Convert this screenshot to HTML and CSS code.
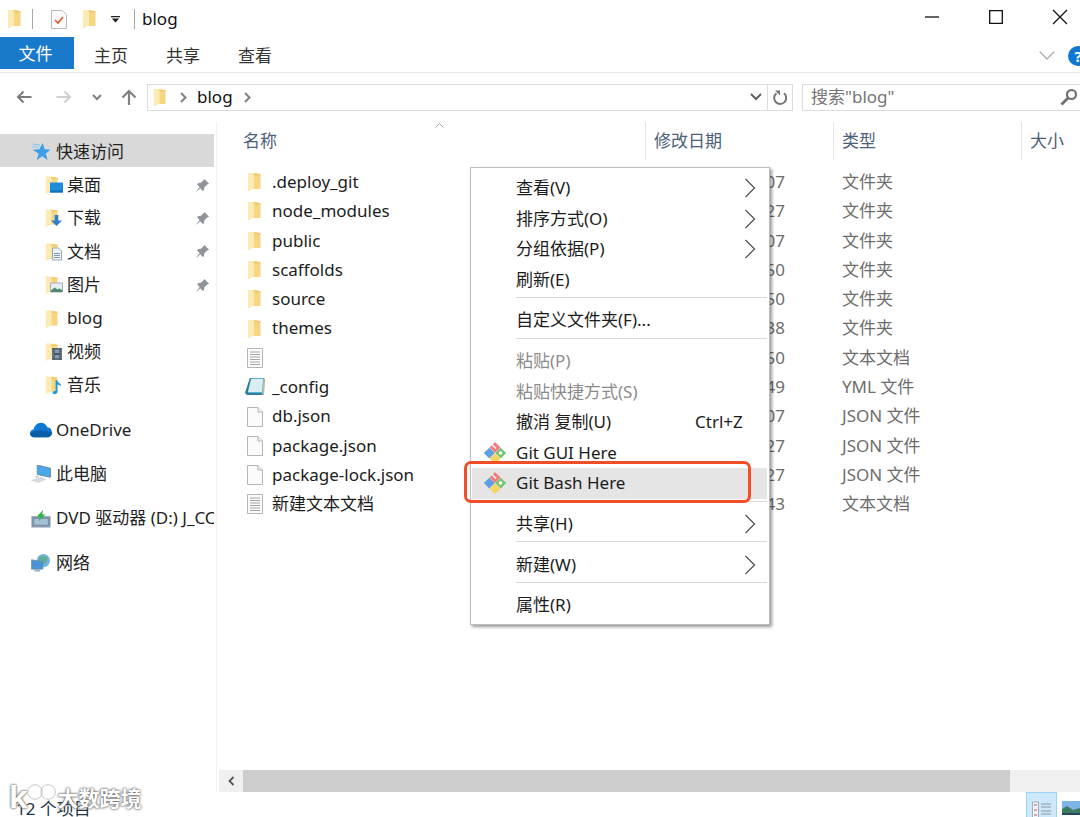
FILE: index.html
```html
<!DOCTYPE html>
<html lang="zh-CN">
<head>
<meta charset="utf-8">
<title>blog</title>
<link rel="stylesheet" href="styles.css">
</head>
<body>
<svg class="defs" aria-hidden="true">
  <symbol id="folder" viewBox="0 0 14 20">
    <path d="M1 1h8.500l4 1.500V17H5L1 19.500z" fill="#f7d682"/>
    <path d="M1 1h4.500l1.500 1v14.500L5 17 1 19.500z" fill="#fcebb4"/>
    <path d="M7 2h6.500v1.500H7z" fill="#efc871"/>
  </symbol>
  <symbol id="doc" viewBox="0 0 16 20">
    <path d="M.5.5h10.500l4.500 4.500v14.500H.5z" fill="#fbfbfb" stroke="#b5b5b5"/>
    <path d="M11 .5v4.500h4.500" fill="#eee" stroke="#b5b5b5"/>
  </symbol>
  <symbol id="txt" viewBox="0 0 16 20">
    <path d="M.5.5h15v19H.5z" fill="#fbfbfb" stroke="#b5b5b5"/>
    <path d="M3 4h10M3 6.500h10M3 9h10M3 11.500h10M3 14h10M3 16.500h10" stroke="#a5a5a5"/>
  </symbol>
  <symbol id="chev" viewBox="0 0 12 24">
    <path d="M1.500 3l9 9-9 9" fill="none" stroke="#555" stroke-width="1.300"/>
  </symbol>
  <symbol id="pin" viewBox="0 0 16 16">
    <path d="M10 1l5 5-2 .8-3 3-.5 3.200-1.200.8-2.800-2.800L2 14.500l-.5-.5L5 9.500 2.300 6.800l.8-1.200 3.200-.5 3-3z" fill="#8e9499"/>
  </symbol>
  <symbol id="git" viewBox="0 0 24 24">
    <path d="M12 1l5.500 5.500L12 12 6.500 6.500z" fill="#ee7f7f"/>
    <path d="M6.300 6.700L11.800 12l-5.500 5.500L.8 12z" fill="#5f9fe0"/>
    <path d="M17.700 6.700L23.200 12l-5.500 5.500L12.200 12z" fill="#79c36d"/>
    <circle cx="17.500" cy="12" r="1.800" fill="#fff"/>
    <path d="M12 12.200l5.500 5.500L12 23l-5.500-5.300z" fill="#f3d564"/>
    <path d="M9 3.500l4 4" stroke="#fff" stroke-width="1.200"/>
  </symbol>
</svg>

<div class="window">
  <header class="titlebar">
    <svg class="qa-folder"><use href="#folder"/></svg>
    <span class="qa-sep"></span>
    <svg class="qa-note" viewBox="0 0 16 19">
      <path d="M.5.5h11l4 4v14H.5z" fill="#fafafa" stroke="#bbb"/>
      <path d="M4 10l3 3 5-6" fill="none" stroke="#e2572b" stroke-width="1.600"/>
    </svg>
    <svg class="qa-folder2"><use href="#folder"/></svg>
    <svg class="qa-caret" viewBox="0 0 9 7"><path d="M0 0h9v1.200H0zM.8 2.500h7.400L4.500 6.500z" fill="#222"/></svg>
    <span class="qa-sep qa-sep2"></span>
    <span class="title-text">blog</span>
    <div class="winctl">
      <svg viewBox="0 0 16 16"><path d="M1 8h14" stroke="#111" stroke-width="1.300"/></svg>
      <svg viewBox="0 0 16 16"><path d="M1.700 1.700h12.600v12.600H1.700z" fill="none" stroke="#111" stroke-width="1.300"/></svg>
      <svg viewBox="0 0 16 16"><path d="M1 1l14 14M15 1L1 15" stroke="#111" stroke-width="1.300"/></svg>
    </div>
  </header>

  <nav class="tabs">
    <span class="tab tab-file">文件</span>
    <span class="tab">主页</span>
    <span class="tab">共享</span>
    <span class="tab">查看</span>
    <svg class="ribbon-chev" viewBox="0 0 16 9"><path d="M.7.7L8 8l7.300-7.300" fill="none" stroke="#a0a0a0" stroke-width="1.200"/></svg>
    <span class="help">?</span>
  </nav>

  <div class="addressrow">
    <svg class="nav-back" viewBox="0 0 16 14"><path d="M15.500 7H2M7.500 1.500L2 7l5.500 5.500" fill="none" stroke="#7b7b7b" stroke-width="2"/></svg>
    <svg class="nav-fwd" viewBox="0 0 16 14"><path d="M.5 7H14M8.500 1.500L14 7l-5.500 5.500" fill="none" stroke="#cfcfcf" stroke-width="2"/></svg>
    <svg class="nav-down" viewBox="0 0 10 7"><path d="M1 1l4 4 4-4" fill="none" stroke="#808080" stroke-width="2"/></svg>
    <svg class="nav-up" viewBox="0 0 16 16"><path d="M8 16V2M1.500 8.500L8 2l6.500 6.500" fill="none" stroke="#808080" stroke-width="2.200"/></svg>
    <div class="addressbox">
      <svg class="addr-folder"><use href="#folder"/></svg>
      <svg class="addr-chev" viewBox="0 0 7 11"><path d="M1 1l4.500 4.500L1 10" fill="none" stroke="#808080" stroke-width="2"/></svg>
      <span class="addr-text">blog</span>
      <svg class="addr-chev addr-chev2" viewBox="0 0 7 11"><path d="M1 1l4.500 4.500L1 10" fill="none" stroke="#808080" stroke-width="2"/></svg>
      <svg class="addr-drop" viewBox="0 0 12 8"><path d="M1 1l5 5 5-5" fill="none" stroke="#606060" stroke-width="2"/></svg>
      <span class="addr-refresh">
        <svg viewBox="0 0 14 16"><path d="M3.500 4.200A6 6 0 1 0 11 4.300" fill="none" stroke="#777" stroke-width="2"/><path d="M2 1.500h5v5z" fill="#777"/></svg>
      </span>
    </div>
    <div class="searchbox">
      <span>搜索"blog"</span>
      <svg viewBox="0 0 18 18"><circle cx="11.500" cy="6.500" r="4.500" fill="none" stroke="#707070" stroke-width="2.200"/><path d="M8 10l-6.500 6.500" stroke="#707070" stroke-width="2.800"/></svg>
    </div>
  </div>

  <div class="main">
    <aside class="sidebar">
      <section class="nav-group">
        <div class="nav-row root selected">
          <svg class="ico-root" viewBox="0 0 18 17"><path d="M10.500 0l2 6 5.500.3-4.500 3.600 1.700 6.100-5-3.500L5 16l1.800-6.100L1 6.300 7.500 6z" fill="#3f9ee8"/><path d="M0 3.500l7 .5M1 1l7 1" stroke="#8cc4ee" stroke-width="1"/></svg>
          <span>快速访问</span>
        </div>
        <div class="nav-row sub">
          <span class="fi"><svg class="fi-f"><use href="#folder"/></svg><svg class="fi-o" viewBox="0 0 13 10"><path d="M0 0h13v10H0z" fill="#1d8ddb"/><path d="M0 8h13v2H0z" fill="#0f6fb8"/></svg></span>
          <span>桌面</span>
          <svg class="pin"><use href="#pin"/></svg>
        </div>
        <div class="nav-row sub">
          <span class="fi"><svg class="fi-f"><use href="#folder"/></svg><svg class="fi-o" viewBox="0 0 13 12"><path d="M4.500 0h4v6h4L6.500 12 .5 6h4z" fill="#2f7fd0"/></svg></span>
          <span>下载</span>
          <svg class="pin"><use href="#pin"/></svg>
        </div>
        <div class="nav-row sub">
          <span class="fi"><svg class="fi-f"><use href="#folder"/></svg><svg class="fi-o fi-d" viewBox="0 0 10 13"><path d="M.5.5h6l3 3v9H.5z" fill="#eef2f6" stroke="#9aa7b3"/><path d="M2 6h6M2 8h6M2 10h6" stroke="#7d99b3"/></svg></span>
          <span>文档</span>
          <svg class="pin"><use href="#pin"/></svg>
        </div>
        <div class="nav-row sub">
          <span class="fi"><svg class="fi-f"><use href="#folder"/></svg><svg class="fi-o" viewBox="0 0 13 10"><path d="M.5.5h12v9H.5z" fill="#e6eef2" stroke="#a5adb3"/><path d="M1 8l3.500-3 3 2 2-1 3 2v1.500H1z" fill="#4f8a6e"/></svg></span>
          <span>图片</span>
          <svg class="pin"><use href="#pin"/></svg>
        </div>
        <div class="nav-row sub">
          <span class="fi"><svg class="fi-f"><use href="#folder"/></svg></span>
          <span>blog</span>
        </div>
        <div class="nav-row sub">
          <span class="fi"><svg class="fi-f"><use href="#folder"/></svg><svg class="fi-o fi-d" viewBox="0 0 11 13"><path d="M0 0h11v13H0z" fill="#4a5560"/><path d="M3 1.500h5v4H3zM3 7.500h5v4H3z" fill="#7f9db5"/><path d="M1 2v9M10 2v9" stroke="#c8cfd4" stroke-dasharray="1 1"/></svg></span>
          <span>视频</span>
        </div>
        <div class="nav-row sub">
          <span class="fi"><svg class="fi-f"><use href="#folder"/></svg><svg class="fi-o fi-d" viewBox="0 0 10 15"><path d="M3.500 0h1.500c.3 3 4.500 3 4.500 7-1-1.500-2.500-2-4-2v7.500c0 1.500-1.500 2.500-3 2.500S0 14 .5 13c.5-1.200 2-1.500 3-1z" fill="#1e9ad6"/></svg></span>
          <span>音乐</span>
        </div>
      </section>
      <section class="nav-group">
        <div class="nav-row root">
          <svg class="ico-root" viewBox="0 0 23 15"><path d="M4.500 15C1.500 15 0 13 0 10.800 0 8.500 2 7 3.800 7 4.500 3 7.800 0 11.500 0c3 0 5.500 1.800 6.500 4.500 3 .2 5 2.800 5 5.500 0 3-2.300 5-5 5z" fill="#0f78d4"/><path d="M4.500 15C1.500 15 0 13 0 10.800c6-4 15-4 23-.8 0 3-2.300 5-5 5z" fill="#0a5ea8"/></svg>
          <span>OneDrive</span>
        </div>
      </section>
      <section class="nav-group">
        <div class="nav-row root">
          <svg class="ico-root" viewBox="0 0 22 19"><path d="M7 0l14 3.500v9.500L7 10z" fill="#4aa8e8" stroke="#6a8ca8"/><path d="M0 16l11-3.500 6 2.500-9 4z" fill="#d5dade"/><path d="M5 11.500l4 1-3 1z" fill="#aab3ba"/></svg>
          <span>此电脑</span>
        </div>
      </section>
      <section class="nav-group">
        <div class="nav-row root">
          <svg class="ico-root" viewBox="0 0 18 16"><path d="M1 6h16v9H1z" fill="#7b93ac" stroke="#8a9bad"/><path d="M3 8h12v5H3z" fill="#a8c0d8"/><path d="M11 0l-1 4h3L7 10l1-4H5z" fill="#31b54a"/></svg>
          <span>DVD 驱动器 (D:) J_CCSA_X64FRE_ZH-CN_DV5</span>
        </div>
      </section>
      <section class="nav-group">
        <div class="nav-row root">
          <svg class="ico-root" viewBox="0 0 20 19"><circle cx="12.500" cy="7" r="7" fill="#6fb5e8"/><path d="M8 2c3 1 6 0 9 1l-1 6-5 3-3-3z" fill="#58a548" opacity=".55"/><path d="M0 6l12 2v8H0z" fill="#4a93d4" stroke="#6a8ca8" stroke-width=".7"/><path d="M3 16h6v2.500H3z" fill="#9eb2c3"/></svg>
          <span>网络</span>
        </div>
      </section>
    </aside>

    <div class="content">
      <div class="colheads">
        <svg class="sort" viewBox="0 0 9 5"><path d="M.5 4.500l4-4 4 4" fill="none" stroke="#a8a8a8"/></svg>
        <span class="colhead">名称</span>
        <span class="colhead">修改日期</span>
        <span class="colhead">类型</span>
        <span class="colhead colhead-last">大小</span>
      </div>
      <div class="filelist">
        <div class="file"><span class="fname"><svg class="i-folder"><use href="#folder"/></svg>.deploy_git</span><span class="fdate">2020/7/16 15:07</span><span class="ftype">文件夹</span></div>
        <div class="file"><span class="fname"><svg class="i-folder"><use href="#folder"/></svg>node_modules</span><span class="fdate">2020/7/16 14:27</span><span class="ftype">文件夹</span></div>
        <div class="file"><span class="fname"><svg class="i-folder"><use href="#folder"/></svg>public</span><span class="fdate">2020/7/16 15:07</span><span class="ftype">文件夹</span></div>
        <div class="file"><span class="fname"><svg class="i-folder"><use href="#folder"/></svg>scaffolds</span><span class="fdate">2020/7/16 13:50</span><span class="ftype">文件夹</span></div>
        <div class="file"><span class="fname"><svg class="i-folder"><use href="#folder"/></svg>source</span><span class="fdate">2020/7/16 13:50</span><span class="ftype">文件夹</span></div>
        <div class="file"><span class="fname"><svg class="i-folder"><use href="#folder"/></svg>themes</span><span class="fdate">2020/7/16 14:38</span><span class="ftype">文件夹</span></div>
        <div class="file"><span class="fname"><svg class="i-doc"><use href="#txt"/></svg></span><span class="fdate">2020/7/16 13:50</span><span class="ftype">文本文档</span></div>
        <div class="file"><span class="fname"><svg class="i-yml" viewBox="0 0 22 20"><path d="M6 1h14l-1 15H1z" fill="#5fb0c8"/><path d="M1 16L6 1l2 0-4 15h14l1 2H3z" fill="#2f7f9c"/><path d="M7 2h12l-1 13H4z" fill="#d8eef2"/><path d="M20 1l1 1-1 16-1 0z" fill="#c2a468"/></svg>_config</span><span class="fdate">2020/7/16 14:49</span><span class="ftype">YML 文件</span></div>
        <div class="file"><span class="fname"><svg class="i-doc"><use href="#doc"/></svg>db.json</span><span class="fdate">2020/7/16 15:07</span><span class="ftype">JSON 文件</span></div>
        <div class="file"><span class="fname"><svg class="i-doc"><use href="#doc"/></svg>package.json</span><span class="fdate">2020/7/16 14:27</span><span class="ftype">JSON 文件</span></div>
        <div class="file"><span class="fname"><svg class="i-doc"><use href="#doc"/></svg>package-lock.json</span><span class="fdate">2020/7/16 14:27</span><span class="ftype">JSON 文件</span></div>
        <div class="file"><span class="fname"><svg class="i-doc"><use href="#txt"/></svg>新建文本文档</span><span class="fdate">2020/7/16 15:43</span><span class="ftype">文本文档</span></div>
      </div>
      <div class="hscroll">
        <span class="hs-btn"><svg viewBox="0 0 7 10"><path d="M5.500 1L1.500 5l4 4" fill="none" stroke="#555" stroke-width="1.800"/></svg></span>
        <span class="hs-thumb"></span>
        <span class="hs-track"></span>
      </div>
    </div>
  </div>

  <footer class="statusbar">
    <span class="status-text">12 个项目</span>
    <span class="view-btn">
      <svg viewBox="0 0 20 20"><path d="M.5 1h6v18h-6z" fill="#eef3f7" stroke="#9fb0bd"/><path d="M2 4h3M2 9h3M2 14h3" stroke="#c55" stroke-width="1"/><path d="M9 3h10M9 6h10M9 10h10M9 13h10M9 17h10" stroke="#8d99a3"/></svg>
    </span>
    <svg class="view-thumb" viewBox="0 0 18 14"><path d="M0 0h18v14H0z" fill="#7fb4e8"/><path d="M0 8l5-3 6 4 7-2v7H0z" fill="#3f7a5e"/><path d="M0 12h18v2H0z" fill="#22495c"/></svg>
  </footer>
</div>

<div class="watermark">
  <span class="wm-k">k</span>
  <svg viewBox="0 0 34 18"><circle cx="9" cy="9" r="6.500" fill="none" stroke="#fff" stroke-width="2.600"/><circle cx="24" cy="9" r="6.500" fill="none" stroke="#fff" stroke-width="2.600"/><circle cx="9" cy="9" r="8.200" fill="none" stroke="#999" stroke-width=".6"/><circle cx="24" cy="9" r="8.200" fill="none" stroke="#999" stroke-width=".6"/></svg>
  <span class="wm-text">大数跨境</span>
</div>

<div class="menu">
  <div class="mi">查看(V)<svg class="mi-chev"><use href="#chev"/></svg></div>
  <div class="mi">排序方式(O)<svg class="mi-chev"><use href="#chev"/></svg></div>
  <div class="mi">分组依据(P)<svg class="mi-chev"><use href="#chev"/></svg></div>
  <div class="mi">刷新(E)</div>
  <div class="msep"></div>
  <div class="mi">自定义文件夹(F)...</div>
  <div class="msep"></div>
  <div class="mi off">粘贴(P)</div>
  <div class="mi off">粘贴快捷方式(S)</div>
  <div class="mi">撤消 复制(U)<span class="mi-key">Ctrl+Z</span></div>
  <div class="mi"><svg class="mi-git"><use href="#git"/></svg>Git GUI Here</div>
  <div class="mi hot"><svg class="mi-git"><use href="#git"/></svg>Git Bash Here</div>
  <div class="msep"></div>
  <div class="mi">共享(H)<svg class="mi-chev"><use href="#chev"/></svg></div>
  <div class="msep"></div>
  <div class="mi">新建(W)<svg class="mi-chev"><use href="#chev"/></svg></div>
  <div class="msep"></div>
  <div class="mi">属性(R)</div>
  <div class="redbox"></div>
</div>
</body>
</html>
```

FILE: styles.css
```css
* { box-sizing: border-box; }
html, body { margin: 0; height: 100%; }
body {
  position: relative;
  overflow: hidden;
  background: #fff;
  color: #1c1c1c;
  font: 17px/1.2 "Noto Sans", "Noto Sans CJK SC", sans-serif;
}
.defs { position: absolute; width: 0; height: 0; }
.window { display: flex; flex-direction: column; height: 817px; }

/* title bar */
.titlebar { display: flex; align-items: center; height: 38px; flex: none; }
.qa-folder { width: 14px; height: 20px; margin-left: 7px; }
.qa-sep { width: 1px; height: 20px; background: #a8a8a8; margin-left: 11px; }
.qa-note { width: 16px; height: 19px; margin-left: 18px; }
.qa-folder2 { width: 14px; height: 20px; margin-left: 15px; }
.qa-caret { width: 9px; height: 7px; margin-left: 15px; }
.qa-sep2 { margin-left: 14px; }
.title-text { margin-left: 7px; color: #111; }
.winctl { display: flex; gap: 48px; margin-left: auto; margin-right: 12px; margin-top: -4px; }
.winctl svg { width: 16px; height: 16px; }

/* ribbon tabs */
.tabs { display: flex; align-items: flex-start; height: 35px; flex: none; border-bottom: 1px solid #e8e8e8; }
.tab { width: 72px; height: 32px; line-height: 36px; text-align: center; color: #333; }
.tab-file { width: 74px; margin-right: 1px; padding-right: 3px; background: #1979ca; color: #fff; line-height: 34px; margin-top: -1px; }
.ribbon-chev { width: 16px; height: 9px; margin: 13px 0 0 auto; }
.help {
  width: 20px; height: 20px; border-radius: 50%; margin: 8px -8px 0 13px; flex: none;
  background: #0f78d4; color: #fff; font-size: 15px; line-height: 20px; text-align: center; font-weight: 700;
}

/* address row */
.addressrow { display: flex; align-items: center; height: 49px; flex: none; padding-bottom: 1px; }
.nav-back { width: 16px; height: 14px; margin-left: 16px; }
.nav-fwd { width: 16px; height: 14px; margin-left: 24px; }
.nav-down { width: 10px; height: 7px; margin-left: 20px; }
.nav-up { width: 16px; height: 16px; margin-left: 19px; }
.addressbox {
  display: flex; align-items: center; width: 646px; height: 27px; margin-left: 10px;
  border: 1px solid #dcdcdc;
}
.addr-folder { width: 13px; height: 19px; margin-left: 5px; }
.addr-chev { width: 7px; height: 11px; margin-left: 14px; }
.addr-text { margin-left: 10px; color: #111; }
.addr-chev2 { margin-left: 11px; }
.addr-drop { width: 12px; height: 8px; margin-left: auto; margin-right: 5px; }
.addr-refresh {
  display: flex; align-items: center; justify-content: center;
  width: 25px; height: 100%; border-left: 1px solid #dcdcdc;
}
.addr-refresh svg { width: 14px; height: 16px; }
.searchbox {
  display: flex; align-items: center; justify-content: space-between; flex: 1;
  height: 27px; margin-left: 9px; margin-right: -2px; padding: 0 3px 0 8px;
  border: 1px solid #dcdcdc; color: #757575;
}
.searchbox svg { width: 18px; height: 18px; }

/* main area */
.main { display: flex; flex: 1; min-height: 0; }
.sidebar { width: 217px; flex: none; padding-top: 12px; border-right: 1px solid #f2f2f2; }
.nav-group + .nav-group { margin-top: 11px; }
.nav-row {
  display: flex; align-items: center; width: 214px; height: 33.4px; padding-top: 2px;
  white-space: nowrap; overflow: hidden; color: #222;
}
.selected { background: #d9d9d9; }
.root { padding-left: 30px; }
.sub { padding-left: 45px; }
.ico-root { width: 22px; height: 18px; margin-right: 4px; flex: none; }
.fi { position: relative; display: block; width: 22px; height: 20px; flex: none; }
.fi-f { position: absolute; left: 0; top: 0; width: 13px; height: 20px; }
.fi-o { position: absolute; left: 5px; top: 7px; width: 13px; height: 11px; }
.fi-d { left: 7px; top: 5px; width: 10px; height: 14px; }
.pin { width: 15px; height: 15px; margin-left: auto; margin-right: 4px; flex: none; }

/* file list */
.content { display: flex; flex-direction: column; flex: 1; min-width: 0; }
.colheads {
  position: relative; display: grid; grid-template-columns: 411px 188px 188px 1fr;
  height: 36px; flex: none; margin-left: 18px;
}
.colhead {
  padding-left: 8px; line-height: 38px; color: #4c6079;
  border-right: 1px solid #e6e6e6; white-space: nowrap;
}
.colhead-last { border-right: 0; }
.sort { position: absolute; left: 200px; top: 1px; width: 9px; height: 5px; }
.filelist { flex: 1; min-height: 0; padding-top: 9.5px; }
.file {
  display: grid; grid-template-columns: 411px 188px 188px 1fr; align-items: center;
  height: 29.3px; margin-left: 18px; white-space: nowrap;
}
.fname { display: flex; align-items: center; padding-left: 12px; color: #1c1c1c; }
.i-folder { width: 14px; height: 20px; margin-right: 11px; flex: none; }
.i-doc { width: 16px; height: 20px; margin-right: 9px; flex: none; }
.i-yml { width: 22px; height: 20px; margin-left: -3px; margin-right: 6px; flex: none; }
.fdate { text-align: right; padding-right: 49px; color: #6d6d6d; }
.ftype { padding-left: 8px; color: #6d6d6d; }
.hscroll { display: flex; height: 22px; flex: none; margin-left: 2px; background: #f0f0f0; }
.hs-btn { display: flex; align-items: center; justify-content: center; width: 24px; }
.hs-btn svg { width: 7px; height: 10px; }
.hs-thumb { width: 767px; background: #cdcdcd; }
.hs-track { flex: 1; }

/* status bar */
.statusbar { display: flex; height: 25px; flex: none; position: relative; }
.status-text { padding: 6px 0 0 16px; color: #1f3447; line-height: 22px; }
.view-btn {
  display: flex; justify-content: center; align-items: flex-start; width: 31px; height: 25px;
  margin-left: auto; padding-top: 8px; background: #cde8fb; border: 1px solid #99d1ff; border-bottom: 0;
}
.view-btn svg { width: 20px; height: 20px; }
.view-thumb { width: 18px; height: 14px; margin: 9px 0 0 5px; flex: none; }

/* watermark */
.watermark {
  position: absolute; left: 9px; top: 780px; display: flex; align-items: center;
  color: #fff; text-shadow: 0 0 2px #555, 0 0 3px #777;
}
.wm-k { font-size: 30px; font-weight: 700; line-height: 30px; }
.watermark svg { width: 30px; height: 16px; margin: -10px 0 0 -1px; }
.wm-text { margin: 3px 0 0 1px; font-size: 21px; font-weight: 700; line-height: 30px; }

/* context menu */
.menu {
  position: absolute; left: 470px; top: 167px; width: 300px; height: 458px;
  padding: 5px 2px 0 1px; background: #fff; border: 1px solid #bdbdbd;
  box-shadow: 2px 2px 3px rgba(0, 0, 0, .4); color: #1c1c1c;
}
.mi { position: relative; height: 30.6px; line-height: 30.6px; padding-left: 44px; white-space: nowrap; }
.off { color: #8b8b8b; }
.hot { background: #e5e5e5; }
.mi-chev { position: absolute; right: 11px; top: 3px; width: 12px; height: 24px; }
.mi-key { position: absolute; left: 223px; }
.mi-git { position: absolute; left: 11px; top: 3px; width: 24px; height: 24px; }
.msep { height: 10px; margin-left: 44px; padding-top: 1.6px; }
.msep::before { content: ""; display: block; height: 1px; background: #d9d9d9; }
.redbox {
  position: absolute; left: -7px; top: 292.5px; width: 287px; height: 42px;
  border: 3.5px solid #f14d26; border-radius: 7px;
}
```
